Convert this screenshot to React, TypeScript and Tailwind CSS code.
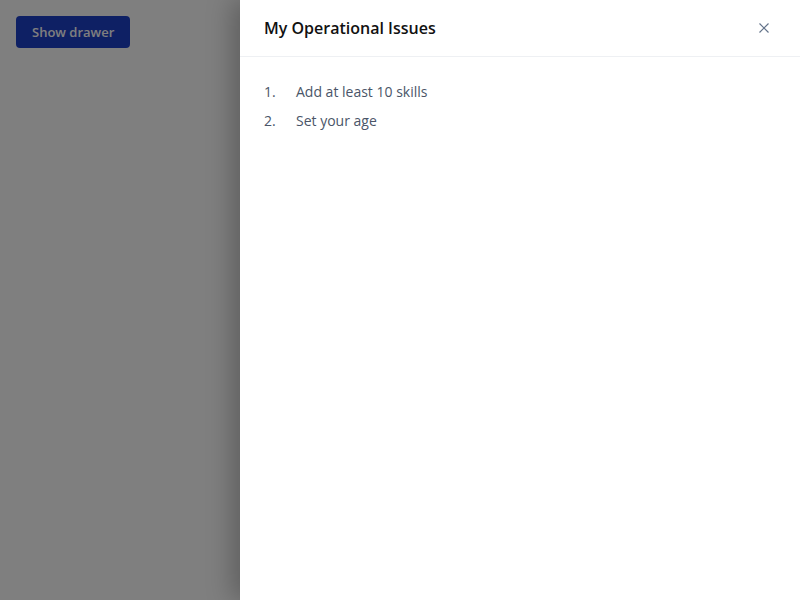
import React from "react";

export default function App() {
  return (
    <div className="relative w-[800px] h-[600px] overflow-hidden bg-white" style={{ fontFamily: '"Open Sans", sans-serif' }}>
      <div className="p-4">
        <button className="h-8 px-4 pt-[2px] rounded bg-[#1d40c8] text-white text-[13px] font-semibold">Show drawer</button>
      </div>
      <div className="absolute inset-0 bg-black/50" />
      <div className="absolute top-0 right-0 h-full w-[560px] bg-white shadow-[-8px_0_24px_rgba(0,0,0,0.25)] flex flex-col">
        <div className="h-[57px] px-6 flex items-center justify-between border-b border-[#eef0f3]">
          <h2 className="text-base font-semibold text-[#111]">My Operational Issues</h2>
          <button className="w-6 h-6 flex items-center justify-center text-[#64748b]">
            <svg width="12" height="12" viewBox="0 0 12 12" fill="none" stroke="currentColor" strokeWidth="1.2">
              <path d="M1.5 1.5L10.5 10.5M10.5 1.5L1.5 10.5" />
            </svg>
          </button>
        </div>
        <ol className="px-6 pt-[25px] flex flex-col gap-[10px] text-sm text-[#4a5568]">
          <li className="flex h-5 items-center"><span className="w-8">1.</span><span>Add at least 10 skills</span></li>
          <li className="flex h-5 items-center -mt-px"><span className="w-8">2.</span><span>Set your age</span></li>
        </ol>
      </div>
    </div>
  );
}
